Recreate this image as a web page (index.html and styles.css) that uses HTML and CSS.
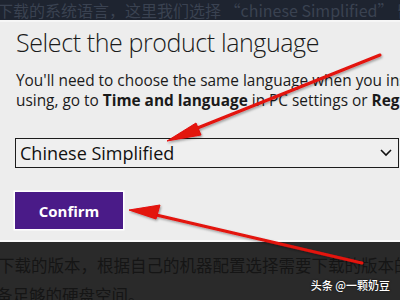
FILE: index.html
```html
<!DOCTYPE html>
<html>
<head>
<meta charset="utf-8">
<link rel="stylesheet" href="styles.css">
</head>
<body>
<div class="page">
  <div class="topbar"><span class="cn-line">下载的系统语言，这里我们选择 “chinese Simplified” 留意下载的语言版本</span></div>
  <div class="panel">
    <h1 class="title">Select the product language</h1>
    <p class="desc">
      <span class="line">You'll need to choose the same language when you install Windows. To see what language you're currently</span>
      <span class="line">using, go to <b>Time and language</b> in PC settings or <b>Region</b> in Control Panel.</span>
    </p>
    <div class="select">
      <span class="select-text">Chinese Simplified</span>
      <svg class="chevron" width="12" height="8" viewBox="0 0 12 8"><polyline points="1,1 6,6 11,1" fill="none" stroke="#111" stroke-width="1.6"/></svg>
    </div>
    <div class="btn-wrap"><button class="confirm">Confirm</button></div>
  </div>
  <div class="footer">
    <span class="cn-line">下载的版本，根据自己的机器配置选择需要下载的版本的位数，并且准</span>
    <span class="cn-line second">备足够的硬盘空间。</span>
    <span class="watermark">头条 @一颗奶豆</span>
  </div>
  <svg class="arrows" width="400" height="300" viewBox="0 0 400 300">
    <defs>
      <filter id="sh" x="-10%" y="-10%" width="120%" height="120%">
        <feDropShadow dx="1" dy="1.5" stdDeviation="1" flood-color="#000" flood-opacity="0.35"/>
      </filter>
    </defs>
    <g fill="#e3120f" stroke="#e3120f" filter="url(#sh)">
      <line x1="380" y1="55" x2="190" y2="131" stroke-width="3" stroke-linecap="round"/>
      <polygon points="167,141 196,123 201,135" stroke-width="1"/>
      <line x1="362" y1="263" x2="152" y2="214" stroke-width="3" stroke-linecap="round"/>
      <polygon points="129,210 160,205 156,219" stroke-width="1"/>
    </g>
  </svg>
</div>
</body>
</html>
```
FILE: styles.css
```css
html, body {
  margin: 0;
  padding: 0;
  width: 400px;
  height: 300px;
  overflow: hidden;
}
.page {
  position: relative;
  width: 400px;
  height: 300px;
  overflow: hidden;
  font-family: "Open Sans", "Noto Sans", "Liberation Sans", sans-serif;
}
.topbar {
  height: 20px;
  background: #1e2430;
  border-bottom: 2px solid #f6f6f6;
  overflow: hidden;
  white-space: nowrap;
}
.topbar .cn-line {
  display: block;
  margin-left: -3px;
  font-family: "Noto Sans CJK SC", sans-serif;
  font-size: 16px;
  line-height: 20px;
  color: #3a4251;
}
.panel {
  height: 218px;
  background: #ededed;
  padding-left: 16px;
  border-bottom: 2px solid #fafafa;
  overflow: hidden;
}
.title {
  margin: 0;
  padding-top: 4px;
  font-size: 25px;
  font-weight: 300;
  line-height: 32px;
  letter-spacing: -0.4px;
  color: #1a1a1a;
  white-space: nowrap;
}
.desc {
  margin: 13px 0 0 0;
  font-size: 15.4px;
  line-height: 20px;
  color: #1a1a1a;
  white-space: nowrap;
}
.desc .line {
  display: block;
}
.desc b {
  font-weight: 700;
}
.select {
  margin-top: 27px;
  margin-left: -1px;
  width: 382px;
  height: 28px;
  border: 1px solid #1c1c1c;
  background: #efefef;
  display: flex;
  align-items: center;
  justify-content: space-between;
  box-sizing: content-box;
}
.select-text {
  padding-left: 4px;
  font-size: 18px;
  color: #111;
}
.chevron {
  margin-right: 6px;
}
.btn-wrap {
  margin-top: 24px;
  margin-left: -1px;
}
.confirm {
  width: 108px;
  height: 37px;
  border: none;
  background: #4a1b88;
  box-shadow: 0 0 0 1.5px #ffffff;
  color: #ffffff;
  font-family: "Open Sans", "Noto Sans", sans-serif;
  font-weight: 700;
  font-size: 15px;
  padding: 0;
}
.footer {
  position: relative;
  height: 58px;
  box-sizing: border-box;
  padding-top: 8px;
  background: #2a2a2a;
  overflow: hidden;
  white-space: nowrap;
}
.footer .cn-line {
  display: block;
  margin-left: -2px;
  font-family: "Noto Sans CJK SC", sans-serif;
  font-size: 16.5px;
  line-height: 30px;
  color: #151515;
}
.footer .cn-line.second {
  margin-left: -4px;
}
.watermark {
  position: absolute;
  right: 10px;
  bottom: 8px;
  font-family: "Noto Sans CJK SC", sans-serif;
  font-size: 11px;
  font-weight: 500;
  line-height: 14px;
  color: #ffffff;
  text-shadow: 0 0 2px rgba(0,0,0,0.8);
}
.arrows {
  position: absolute;
  left: 0;
  top: 0;
  pointer-events: none;
}
```
